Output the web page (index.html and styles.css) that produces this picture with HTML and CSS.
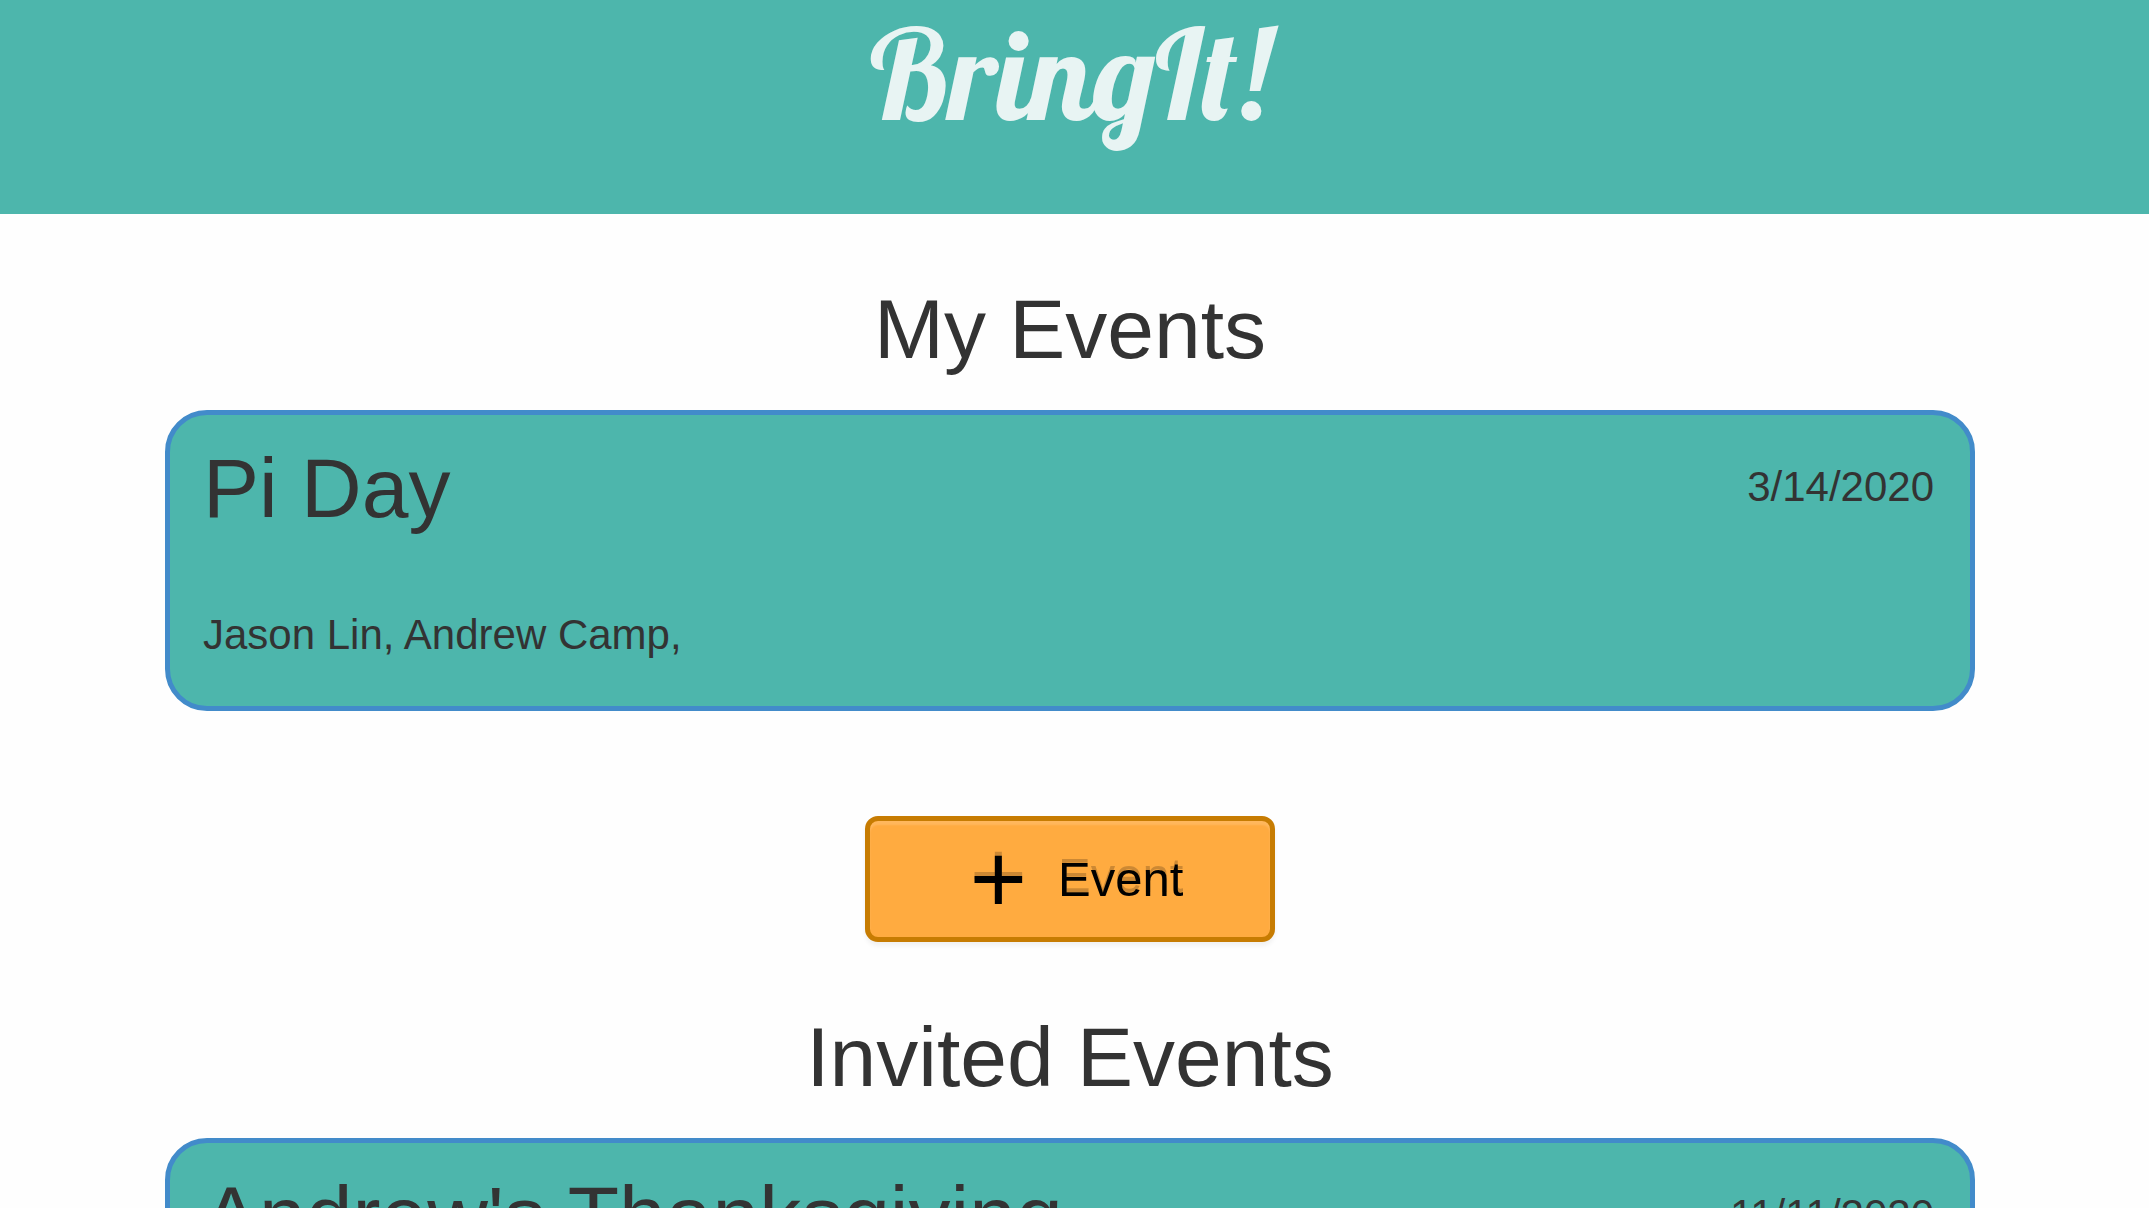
FILE: index.html
```html
<!DOCTYPE html>
<html lang="en">
<head>
<meta charset="utf-8">
<title>BringIt!</title>
<link rel="stylesheet" href="styles.css">
</head>
<body>
<header class="banner"><div class="logo">BringIt!</div></header>
<main class="content">
  <section class="group">
    <h1 class="heading">My Events</h1>
    <article class="card">
      <div class="card-top">
        <h2 class="card-title">Pi Day</h2>
        <time class="card-date" datetime="2020-03-14">3/14/2020</time>
      </div>
      <p class="card-people">Jason Lin, Andrew Camp,</p>
    </article>
  </section>
  <button class="add" type="button"><span class="plus">+</span><span>Event</span></button>
  <section class="group">
    <h1 class="heading">Invited Events</h1>
    <article class="card">
      <div class="card-top">
        <h2 class="card-title">Andrew's Thanksgiving</h2>
        <time class="card-date" datetime="2020-11-11">11/11/2020</time>
      </div>
    </article>
  </section>
</main>
</body>
</html>
```
FILE: styles.css
```css
* { box-sizing: border-box; }
body {
  margin: 0;
  height: 100vh;
  overflow: hidden;
  background: #fefefe;
  color: #333;
  font-family: Arial, "Liberation Sans", sans-serif;
  font-size: 42px;
}
.banner {
  padding: 0 10px 67px 0;
  background: #4db6ac;
  text-align: center;
}
.logo {
  color: #e8f4f3;
  font: 400 126px/147px Lobster, Lato, sans-serif;
}
.content {
  display: flex;
  flex-direction: column;
  align-items: center;
  padding: 67px 174px 0 165px;
}
.group { width: 100%; }
.heading {
  margin: 0 0 33px;
  font-size: 84px;
  font-weight: 400;
  line-height: 96px;
  text-align: center;
}
.card {
  min-height: 301px;
  padding: 25px 36px 28px 33px;
  background: #4db6ac;
  border: 5px solid #428bca;
  border-radius: 42px;
}
.card-top {
  display: flex;
  justify-content: space-between;
}
.card-title {
  margin: 0;
  font-size: 84px;
  font-weight: 400;
  line-height: 96px;
}
.card-date { line-height: 94px; }
.card-people {
  margin: 75px 0 0;
  line-height: 48px;
}
.add {
  display: flex;
  justify-content: center;
  align-items: center;
  gap: 31px;
  width: 410px;
  height: 126px;
  margin: 105px 0 67px;
  padding: 0 0 0 13px;
  border: 5px solid #c77c02;
  border-radius: 13px;
  background: #ffab40;
  box-shadow: inset 0 4px 2px rgba(255, 255, 255, .15), 0 4px 4px rgba(0, 0, 0, .05);
  color: #000;
  font: 49px Arial, "Liberation Sans", sans-serif;
  text-shadow: 0 -4px 0 rgba(0, 0, 0, .2);
}
.plus {
  font-size: 98px;
  line-height: 80px;
}
```
